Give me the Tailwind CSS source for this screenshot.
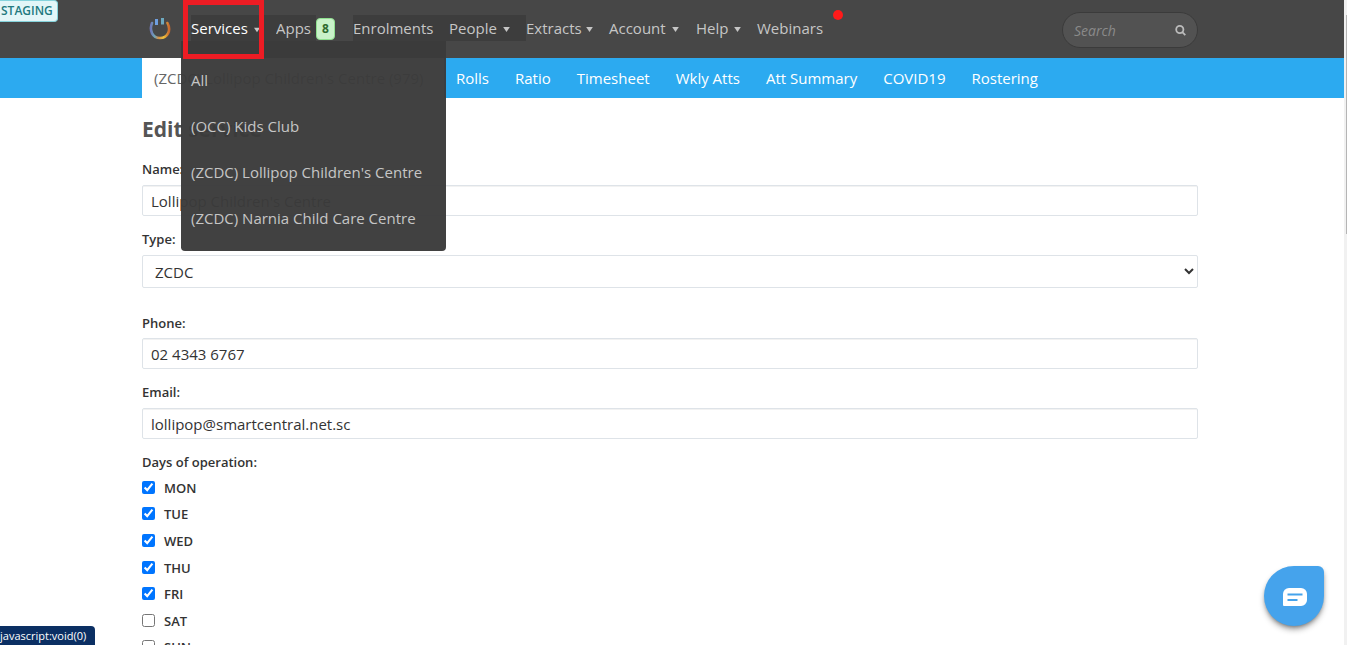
<!DOCTYPE html>
<html lang="en">
<head>
    <meta charset="UTF-8">
    <meta name="viewport" content="width=device-width, initial-scale=1.0">
    <title>Edit service</title>
    <script src="https://cdn.jsdelivr.net/npm/@tailwindcss/browser@4"></script>
</head>
<body class="relative h-screen overflow-hidden bg-white font-['Open_Sans','Noto_Sans',sans-serif] text-[15px] text-[#333]">

<header class="h-[58px] bg-[#474747] pr-1 mr-[3px]">
    <div class="mx-auto max-w-[1056px] h-full flex items-start pt-[15px] pl-[7px]">
        <a href="#" aria-label="Home" class="w-[42px] shrink-0">
            <svg class="w-[22px] h-[26px]" viewBox="0 0 22 26" fill="none" stroke-width="2.6">
                <defs>
                    <linearGradient id="ring" x1="0" y1="0" x2="1" y2="0">
                        <stop offset="0" stop-color="#6f78b8"/>
                        <stop offset=".2" stop-color="#6fa5b8"/>
                        <stop offset=".42" stop-color="#d5914a"/>
                        <stop offset=".7" stop-color="#f0c33c"/>
                        <stop offset="1" stop-color="#c9682e"/>
                    </linearGradient>
                </defs>
                <path stroke="url(#ring)" stroke-linecap="round" d="M3 8C0 15.500 3.500 23 11 23S22.500 15.500 18.500 8"/>
                <path stroke="#6f9fe0" stroke-width="3" d="M7.500 4v6"/>
                <path stroke="#6da9c0" stroke-width="3" d="M13.500 3v6.500"/>
            </svg>
        </a>
        <nav class="flex h-[26px] items-center text-[#c6c6c6] whitespace-nowrap">
            <div class="relative w-[85px] h-full flex items-center bg-[#3d3d3d]">
                <button type="button" class="flex items-center gap-[6px] text-white">Services
                    <svg class="w-[6px] h-[6px] mt-[3px]" viewBox="0 0 8 6" fill="#c6c6c6"><path d="M0 0h8L4 6z"/></svg>
                </button>
                <!-- services menu -->
                <ul class="absolute z-10 left-[-10px] top-[26px] w-[265px] h-[210px] pl-[10px] pt-7 rounded-b bg-[#3b3b3b]/97">
                    <li class="h-[46px]"><a href="#">All</a></li>
                    <li class="h-[46px]"><a href="#">(OCC) Kids Club</a></li>
                    <li class="h-[46px]"><a href="#">(ZCDC) Lollipop Children's Centre</a></li>
                    <li class="h-[46px]"><a href="#">(ZCDC) Narnia Child Care Centre</a></li>
                </ul>
                <div class="absolute z-20 left-[-8px] top-[-15px] w-[81px] h-[59px] border-5 border-[#ed1c24]"></div>
            </div>
            <a href="#" class="w-[77px] h-full flex items-center">
                <span class="w-10 h-full flex items-center bg-[#3d3d3d]">Apps</span>
                <span class="w-[19px] h-[22px] mt-px flex items-center justify-center rounded border border-[#8ee08e] bg-[#c9f2c9] text-[#2f6b2f] text-xs font-bold">8</span>
            </a>
            <a href="#" class="w-[96px] h-full flex items-center bg-[#3d3d3d]">Enrolments</a>
            <button type="button" class="w-[77px] h-full flex items-center gap-[6px] bg-[#3d3d3d]">People
                <svg class="w-[7px] h-[5px] mt-[3px]" viewBox="0 0 8 6" fill="currentColor"><path d="M0 0h8L4 6z"/></svg>
            </button>
            <button type="button" class="w-[83px] flex items-center gap-[4px]">Extracts
                <svg class="w-[7px] h-[5px] mt-[3px]" viewBox="0 0 8 6" fill="currentColor"><path d="M0 0h8L4 6z"/></svg>
            </button>
            <button type="button" class="w-[87px] flex items-center gap-[6px]">Account
                <svg class="w-[7px] h-[5px] mt-[3px]" viewBox="0 0 8 6" fill="currentColor"><path d="M0 0h8L4 6z"/></svg>
            </button>
            <button type="button" class="w-[61px] flex items-center gap-[6px]">Help
                <svg class="w-[7px] h-[5px] mt-[3px]" viewBox="0 0 8 6" fill="currentColor"><path d="M0 0h8L4 6z"/></svg>
            </button>
            <a href="#" class="relative w-[76px]">Webinars
                <span class="absolute left-full -top-[7px] w-[10px] h-[10px] rounded-full bg-[#ff1a1a]"></span>
            </a>
        </nav>
        <form class="ml-auto -mt-[3px] h-9 w-[136px] flex items-center rounded-full border border-[#3b3b3b] bg-[#525252]">
            <input type="search" aria-label="Search" placeholder="Search" class="w-[100px] pl-[11px] pt-px text-sm italic outline-none placeholder:text-[#8a8a8a]">
            <button type="submit" aria-label="Submit search" class="w-9 h-8 flex items-center justify-center">
                <svg class="w-[11px] h-[11px]" viewBox="0 0 11 11" fill="none" stroke="#bbb" stroke-width="1.8"><circle cx="4.800" cy="4.500" r="3.600"/><path d="M7.300 7.200L10.300 10.200"/></svg>
            </button>
        </form>
    </div>
</header>

<div class="bg-[#2caaf0] pr-1 mr-[3px]">
    <nav class="mx-auto max-w-[1056px] h-10 flex items-center text-white whitespace-nowrap">
        <a href="#" class="w-[302px] h-full flex items-center bg-white pl-3 text-[#666]">(ZCDC) Lollipop Children's Centre (979)</a>
        <div class="flex gap-[26px] pl-3">
            <a href="#">Rolls</a>
            <a href="#">Ratio</a>
            <a href="#">Timesheet</a>
            <a href="#">Wkly Atts</a>
            <a href="#">Att Summary</a>
            <a href="#">COVID19</a>
            <a href="#">Rostering</a>
        </div>
    </nav>
</div>

<main class="pr-1 mr-[3px]">
    <form class="mx-auto max-w-[1056px] pt-4">
        <h1 class="text-[21px] leading-[30px] font-bold text-[#555]">Edit service</h1>

        <label for="name" class="block mt-4 h-[25px] text-[13px] leading-[18px] font-semibold">Name:</label>
        <input id="name" type="text" value="Lollipop Children's Centre" class="block w-full h-[31px] px-2 border border-[#dee3e8] rounded-xs inset-shadow-2xs">

        <label for="type" class="block mt-[14px] h-[25px] text-[13px] leading-[18px] font-semibold">Type:</label>
        <select id="type" class="block w-full h-[33px] px-2 border border-[#dee3e8] rounded-xs bg-white">
            <option>ZCDC</option>
        </select>

        <label for="phone" class="block mt-[26px] h-[24px] text-[13px] leading-[18px] font-semibold">Phone:</label>
        <input id="phone" type="text" value="02 4343 6767" class="block w-full h-[31px] px-2 border border-[#dee3e8] rounded-xs inset-shadow-2xs">

        <label for="email" class="block mt-[14px] h-[25px] text-[13px] leading-[18px] font-semibold">Email:</label>
        <input id="email" type="email" value="lollipop@smartcentral.net.sc" class="block w-full h-[31px] px-2 border border-[#dee3e8] rounded-xs inset-shadow-2xs">

        <fieldset class="mt-[14px] text-[13px] leading-[18px] font-semibold">
            <legend class="h-[25px]">Days of operation:</legend>
            <div class="flex flex-col">
                <label class="flex items-start gap-[9px] h-[26px]"><input type="checkbox" checked class="w-[13px] h-[13px] mt-[3px] accent-[#0075ff]"><span class="mt-px">MON</span></label>
                <label class="flex items-start gap-[9px] h-[27px]"><input type="checkbox" checked class="w-[13px] h-[13px] mt-[3px] accent-[#0075ff]"><span class="mt-px">TUE</span></label>
                <label class="flex items-start gap-[9px] h-[27px]"><input type="checkbox" checked class="w-[13px] h-[13px] mt-[3px] accent-[#0075ff]"><span class="mt-px">WED</span></label>
                <label class="flex items-start gap-[9px] h-[26px]"><input type="checkbox" checked class="w-[13px] h-[13px] mt-[3px] accent-[#0075ff]"><span class="mt-px">THU</span></label>
                <label class="flex items-start gap-[9px] h-[27px]"><input type="checkbox" checked class="w-[13px] h-[13px] mt-[3px] accent-[#0075ff]"><span class="mt-px">FRI</span></label>
                <label class="flex items-start gap-[9px] h-[26px]"><input type="checkbox" class="w-[13px] h-[13px] mt-[3px]"><span class="mt-px">SAT</span></label>
                <label class="flex items-start gap-[9px] h-[27px]"><input type="checkbox" class="w-[13px] h-[13px] mt-[3px]"><span class="mt-px">SUN</span></label>
            </div>
        </fieldset>
    </form>
</main>

<!-- environment label -->
<div class="absolute top-0 left-0 h-[22px] pl-px pr-1 flex items-center rounded-r border border-l-0 border-[#86d3dc] bg-[#e3f6f8] text-[#23797f] text-xs font-semibold">STAGING</div>

<!-- link target -->
<div class="absolute bottom-0 left-0 h-[19px] w-[95px] pt-[2px] flex items-center rounded-tr bg-[#0b2f63] text-white text-[11px] whitespace-nowrap">javascript:void(0)</div>

<button type="button" aria-label="Open chat" class="absolute right-[23px] bottom-[19px] w-[60px] h-[60px] pl-[2px] flex items-center justify-center rounded-[30px] rounded-tr-[6px] bg-[#45a3ec] shadow-md shadow-black/40">
    <svg class="w-6 h-[18px] mt-[2px]" viewBox="0 0 24 18" fill="none">
        <path fill="#fff" d="M6 0h12a6 6 0 0 1 6 6v6a6 6 0 0 1-6 6H1a1 1 0 0 1-1-1V6a6 6 0 0 1 6-6z"/>
        <path stroke="#45a3ec" stroke-width="2" d="M4.500 6.500h15M4.500 12h10"/>
    </svg>
</button>

<!-- scroll track -->
<div class="absolute top-0 right-0 w-[3px] h-full bg-[#f1f1f1] flex justify-end pt-[15px]">
    <div class="w-px h-[219px] bg-[#b5b5b5]"></div>
</div>
</body>
</html>
